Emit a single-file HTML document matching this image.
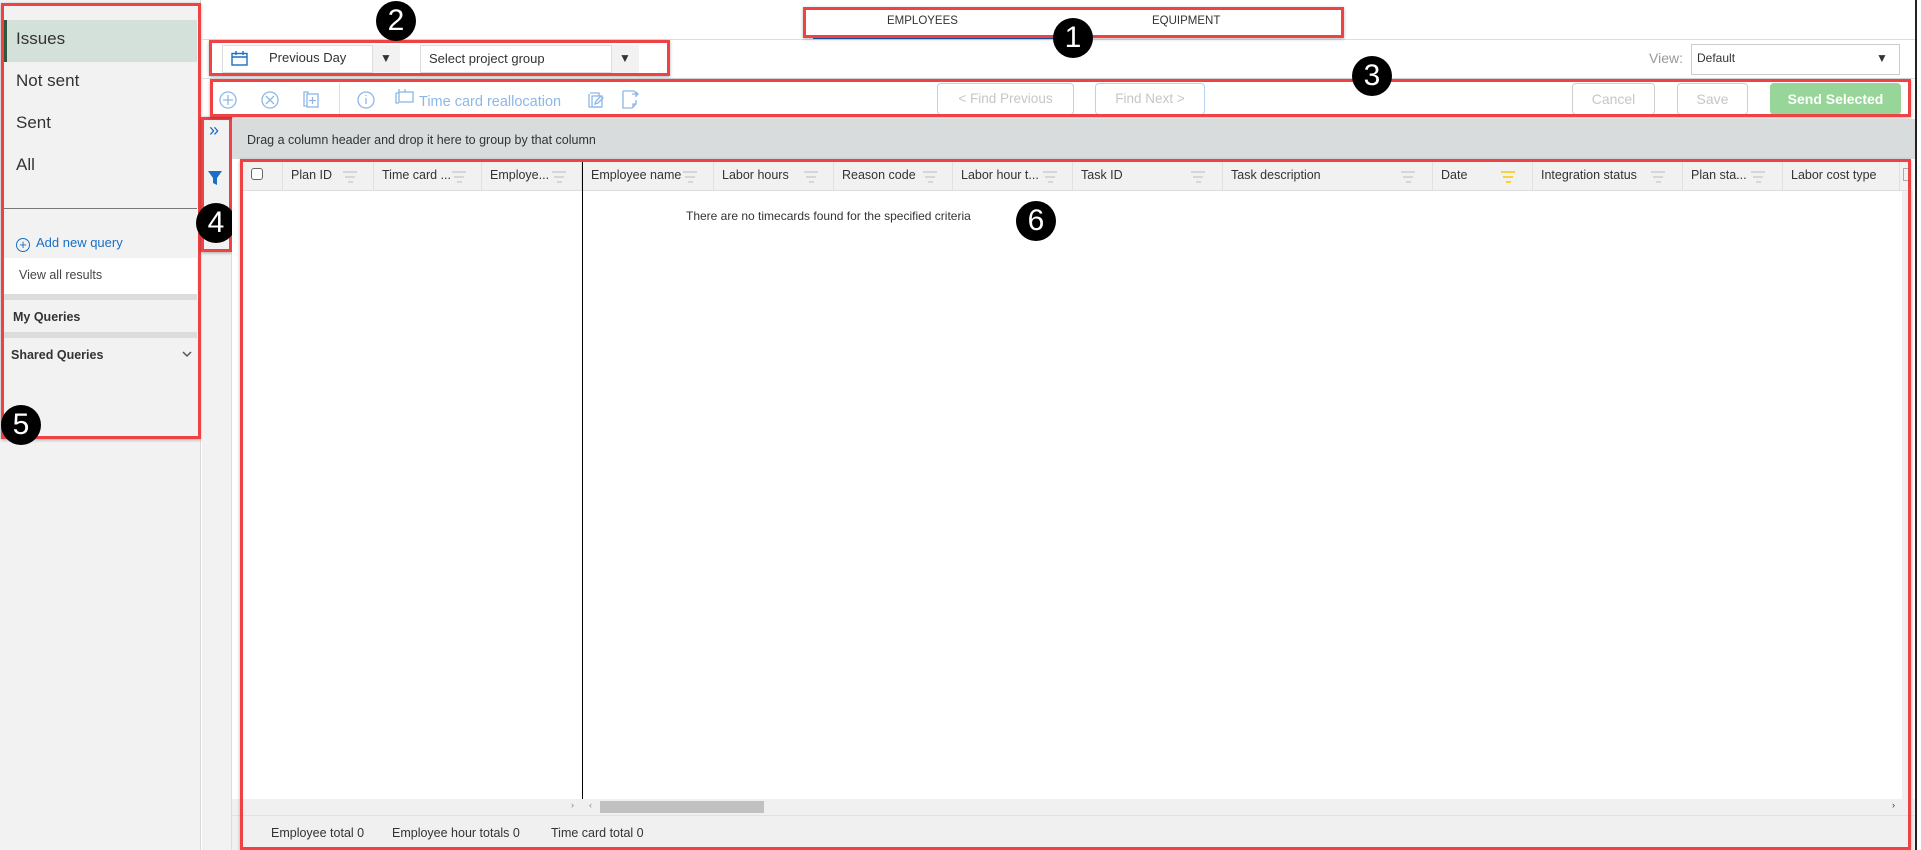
<!DOCTYPE html>
<html><head><meta charset="utf-8"><style>
*{box-sizing:border-box;margin:0;padding:0}
body{width:1921px;height:850px;overflow:hidden;background:#fff;font-family:"Liberation Sans",sans-serif;color:#333;position:relative}
.a{position:absolute}
.red{position:absolute;border:3px solid #ef4244;box-shadow:0 1px 3px rgba(0,0,0,.3)}
.circ{position:absolute;width:40px;height:40px;border-radius:50%;background:#000;color:#fff;font-size:30px;text-align:center;line-height:40px}
.hd{position:absolute;top:159px;height:32px;line-height:32px;font-size:12.5px;color:#333;border-right:1px solid #e0e0e0;padding-left:8px;white-space:nowrap}
.fi{position:absolute;top:12px;width:14px}
.fi i{display:block;height:2px;background:#d6d6d6;margin:0 auto 3px}
.btn{position:absolute;top:83px;height:32px;border:1px solid #cfcfcf;border-radius:4px;font-size:14px;color:#c6c6c6;text-align:center;line-height:30px}
.side{position:absolute;left:16px;font-size:17px;color:#333}
</style></head><body>
<!-- sidebar -->
<div class="a" style="left:0;top:0;width:201px;height:850px;background:#f2f2f2;border-right:1px solid #d8d8d8"></div>
<div class="a" style="left:4px;top:20px;width:193px;height:42px;background:#d4e1da;border-left:3px solid #2b5a3e"></div>
<div class="side" style="top:29px">Issues</div>
<div class="side" style="top:71px">Not sent</div>
<div class="side" style="top:113px">Sent</div>
<div class="side" style="top:155px">All</div>
<div class="a" style="left:4px;top:208px;width:193px;height:1px;background:#777"></div>
<div class="a" style="left:16px;top:235px;font-size:13px;color:#1a6fc4"><span style="display:inline-block;width:14px;height:14px;border:1.3px solid #1a6fc4;border-radius:50%;text-align:center;line-height:11px;font-size:13px;vertical-align:-2px;margin-right:6px">+</span>Add new query</div>
<div class="a" style="left:4px;top:258px;width:193px;height:36px;background:#fff"></div>
<div class="a" style="left:19px;top:268px;font-size:12.5px;color:#444">View all results</div>
<div class="a" style="left:4px;top:294px;width:193px;height:6px;background:#dcdcdc"></div>
<div class="a" style="left:13px;top:310px;font-size:12.5px;color:#333;font-weight:bold">My Queries</div>
<div class="a" style="left:4px;top:332px;width:193px;height:6px;background:#dcdcdc"></div>
<div class="a" style="left:11px;top:348px;font-size:12.5px;color:#333;font-weight:bold">Shared Queries</div>
<svg class="a" style="left:181px;top:349px" width="12" height="10"><path d="M2 3l4 4 4-4" fill="none" stroke="#555" stroke-width="1.5"/></svg>
<div class="red" style="left:1px;top:3px;width:200px;height:436px"></div>
<div class="circ" style="left:1px;top:405px">5</div>

<!-- strip -->
<div class="a" style="left:202px;top:116px;width:30px;height:734px;background:#f2f2f2;border-right:1px solid #ddd"></div>
<div class="a" style="left:209px;top:120px;font-size:18px;color:#1a6fc4">»</div>
<svg class="a" style="left:207px;top:170px" width="16" height="16"><path d="M1 1h14l-5 7v7l-4-2v-5z" fill="#1a6fc4"/></svg>
<div class="red" style="left:201px;top:117px;width:31px;height:135px"></div>
<div class="circ" style="left:196px;top:203px">4</div>

<!-- top tabs -->
<div class="a" style="left:201px;top:39px;width:1714px;height:1px;background:#ddd"></div>
<div class="a" style="left:887px;top:15px;font-size:11.5px;color:#333">EMPLOYEES</div>
<div class="a" style="left:1152px;top:15px;font-size:11.5px;color:#333">EQUIPMENT</div>
<div class="a" style="left:813px;top:37px;width:240px;height:2px;background:#1a5fb4"></div>
<div class="red" style="left:803px;top:7px;width:541px;height:31px"></div>
<div class="circ" style="left:1053px;top:18px">1</div>
<div class="a" style="left:1915px;top:0;width:2px;height:850px;background:#222"></div>

<!-- filter row -->
<div class="a" style="left:222px;top:45px;width:178px;height:28px;border:1px solid #ddd;background:#fff"></div>
<svg class="a" style="left:231px;top:51px" width="17" height="15"><rect x="1" y="2.5" width="15" height="11.5" fill="none" stroke="#1a6fc4" stroke-width="1.4"/><path d="M1 6h15M5 0v4M12 0v4" stroke="#1a6fc4" stroke-width="1.4"/></svg>
<div class="a" style="left:269px;top:50px;font-size:13px;color:#333">Previous Day</div>
<div class="a" style="left:372px;top:45px;width:28px;height:28px;border-left:1px solid #ddd;background:#f2f2f2"></div>
<div class="a" style="left:380px;top:51px;font-size:12px;color:#333">▼</div>
<div class="a" style="left:420px;top:45px;width:219px;height:28px;border:1px solid #ddd;background:#fff"></div>
<div class="a" style="left:429px;top:51px;font-size:13px;color:#333">Select project group</div>
<div class="a" style="left:611px;top:45px;width:28px;height:28px;border-left:1px solid #ddd;background:#f2f2f2"></div>
<div class="a" style="left:619px;top:51px;font-size:12px;color:#333">▼</div>
<div class="red" style="left:209px;top:40px;width:461px;height:36px"></div>
<div class="circ" style="left:376px;top:1px">2</div>
<div class="a" style="left:1649px;top:50px;font-size:14px;color:#999">View:</div>
<div class="a" style="left:1691px;top:44px;width:209px;height:31px;border:1px solid #ccc"></div>
<div class="a" style="left:1697px;top:51px;font-size:12px;color:#333">Default</div>
<div class="a" style="left:1876px;top:51px;font-size:12px;color:#333">▼</div>
<div class="a" style="left:201px;top:78px;width:1714px;height:1px;background:#ddd"></div>

<!-- toolbar -->
<svg class="a" style="left:218px;top:88px" width="440" height="26" fill="none" stroke="#8db7e6" stroke-width="1.3">
<circle cx="10" cy="12" r="8"/><path d="M10 7v10M5 12h10"/>
<circle cx="52" cy="12" r="8"/><path d="M48 8l8 8M56 8l-8 8"/>
<path d="M90 6v-2h-4v14h3"/><rect x="89" y="6" width="11" height="13"/><path d="M94.5 9v7M91 12.5h7"/>
<circle cx="148" cy="12" r="8"/><path d="M148 10v6M148 7v1"/>
<path d="M178 5v10h3M178 5h3v-2M181 1v3M187 1v3"/><rect x="181" y="4" width="14" height="10"/>
<path d="M371 6v13h12M372 5h9v3"/><rect x="374" y="8" width="10" height="11"/><path d="M377 16l1-3 5-5 2 2-5 5z"/>
<path d="M405 3h11l2 2v4M405 3v17h9l4-4v-4M415 20v-4h3M414 6h6m-2-2l2 2-2 2"/>
</svg>
<div class="a" style="left:339px;top:83px;width:1px;height:31px;background:#e0e0e0"></div>
<div class="a" style="left:419px;top:94px;font-size:14.5px;color:#8db7e6">Time card reallocation</div>
<div class="btn" style="left:937px;width:137px;border-color:#b8d2ef;font-size:13.5px">&lt; Find Previous</div>
<div class="btn" style="left:1095px;width:110px;border-color:#b8d2ef;font-size:13.5px">Find Next &gt;</div>
<div class="btn" style="left:1572px;width:83px">Cancel</div>
<div class="btn" style="left:1677px;width:71px">Save</div>
<div class="btn" style="left:1770px;width:131px;background:#98d598;border-color:#98d598;color:#fff;font-weight:bold">Send Selected</div>
<div class="red" style="left:210px;top:79px;width:1701px;height:38px"></div>
<div class="circ" style="left:1352px;top:56px">3</div>

<!-- group bar -->
<div class="a" style="left:232px;top:119px;width:1683px;height:40px;background:#d9dcdc"></div>
<div class="a" style="left:247px;top:133px;font-size:12.5px;color:#333">Drag a column header and drop it here to group by that column</div>

<!-- grid -->
<div class="a" style="left:232px;top:159px;width:1683px;height:691px;background:#fff"></div>
<div class="a" style="left:240px;top:159px;width:1670px;height:32px;background:#f1f1f1;border-bottom:1px solid #ddd"></div>
<div class="a" style="left:251px;top:168px;width:12px;height:12px;border:1px solid #666;border-radius:3px;background:#fff"></div>
<div class="hd" style="left:282px;width:0;padding:0"></div>
<div class="hd" style="left:283px;width:91px">Plan ID<div class="fi" style="left:60px"><i style="width:14px"></i><i style="width:10px"></i><i style="width:5px"></i></div></div>
<div class="hd" style="left:374px;width:108px">Time card ...<div class="fi" style="left:78px"><i style="width:14px"></i><i style="width:10px"></i><i style="width:5px"></i></div></div>
<div class="hd" style="left:482px;width:100px">Employe...<div class="fi" style="left:70px"><i style="width:14px"></i><i style="width:10px"></i><i style="width:5px"></i></div></div>
<div class="hd" style="left:583px;width:131px">Employee name<div class="fi" style="left:100px"><i style="width:14px"></i><i style="width:10px"></i><i style="width:5px"></i></div></div>
<div class="hd" style="left:714px;width:120px">Labor hours<div class="fi" style="left:90px"><i style="width:14px"></i><i style="width:10px"></i><i style="width:5px"></i></div></div>
<div class="hd" style="left:834px;width:119px">Reason code<div class="fi" style="left:89px"><i style="width:14px"></i><i style="width:10px"></i><i style="width:5px"></i></div></div>
<div class="hd" style="left:953px;width:120px">Labor hour t...<div class="fi" style="left:90px"><i style="width:14px"></i><i style="width:10px"></i><i style="width:5px"></i></div></div>
<div class="hd" style="left:1073px;width:150px">Task ID<div class="fi" style="left:118px"><i style="width:14px"></i><i style="width:10px"></i><i style="width:5px"></i></div></div>
<div class="hd" style="left:1223px;width:210px">Task description<div class="fi" style="left:178px"><i style="width:14px"></i><i style="width:10px"></i><i style="width:5px"></i></div></div>
<div class="hd" style="left:1433px;width:100px">Date<div class="fi" style="left:68px"><i style="width:14px;background:#f5d33c"></i><i style="width:10px;background:#f5d33c"></i><i style="width:5px;background:#f5d33c"></i></div></div>
<div class="hd" style="left:1533px;width:150px">Integration status<div class="fi" style="left:118px"><i style="width:14px"></i><i style="width:10px"></i><i style="width:5px"></i></div></div>
<div class="hd" style="left:1683px;width:100px">Plan sta...<div class="fi" style="left:68px"><i style="width:14px"></i><i style="width:10px"></i><i style="width:5px"></i></div></div>
<div class="hd" style="left:1783px;width:117px">Labor cost type</div>
<div class="a" style="left:1903px;top:168px;width:6px;height:13px;border:1px solid #aaa"></div>
<div class="a" style="left:582px;top:159px;width:1px;height:650px;background:#000"></div>
<div class="a" style="left:686px;top:209px;font-size:12px;color:#333">There are no timecards found for the specified criteria</div>
<div class="circ" style="left:1016px;top:201px">6</div>
<div class="a" style="left:1902px;top:191px;width:11px;height:608px;background:#f0f0f0"></div>
<!-- hscroll -->
<div class="a" style="left:232px;top:799px;width:1683px;height:16px;background:#f0f0f0"></div>
<div class="a" style="left:600px;top:801px;width:164px;height:12px;background:#c1c1c1"></div>
<div class="a" style="left:571px;top:800px;font-size:9px;color:#888">›</div>
<div class="a" style="left:589px;top:800px;font-size:9px;color:#888">‹</div>
<div class="a" style="left:1892px;top:800px;font-size:9px;color:#333">›</div>
<!-- footer -->
<div class="a" style="left:232px;top:815px;width:1683px;height:35px;background:#f0f0f0;border-top:1px solid #e2e2e2"></div>
<div class="a" style="left:271px;top:826px;font-size:12.5px;color:#333">Employee total 0</div>
<div class="a" style="left:392px;top:826px;font-size:12.5px;color:#333">Employee hour totals 0</div>
<div class="a" style="left:551px;top:826px;font-size:12.5px;color:#333">Time card total 0</div>
<div class="red" style="left:240px;top:159px;width:1671px;height:691px"></div>
</body></html>
